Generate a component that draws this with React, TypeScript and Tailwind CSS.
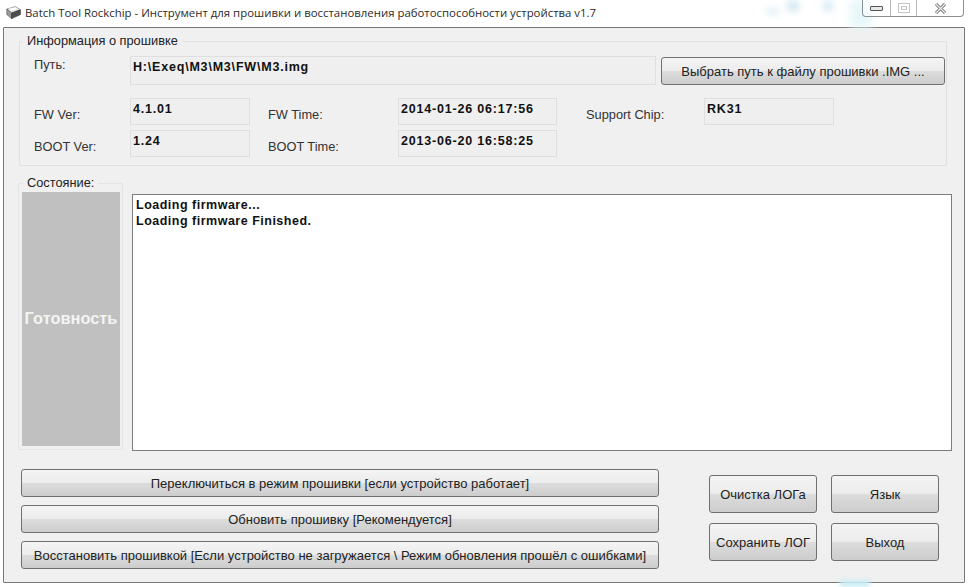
const btn = "flex items-center justify-center rounded-[3px] border border-[#707070] bg-[linear-gradient(to_bottom,#f4f4f4_0%,#ececec_48%,#dcdcdc_52%,#cdcdcd_100%)] pt-[1px] text-[13px] text-[#222222]";
const field = "border border-[#dfdfdf] bg-[#efefef] pl-[2px] pt-[1px] text-[12.5px] font-bold tracking-[0.8px] text-[#111111] leading-[18px]";
const label = "pt-[8px] text-[12.8px] text-[#333333] leading-[18px]";

function Blot({ c }: { c: string }) {
  return <span className={c} />;
}

export default function App() {
  return (
    <div className="relative h-[587px] w-[968px] overflow-hidden bg-white font-['Liberation_Sans',sans-serif]">
      <Blot c="absolute left-[766px] top-[7px] h-[8px] w-[14px] rounded-full bg-[#e6f3f8] blur-[3px]" />
      <Blot c="absolute left-[786px] top-[0px] h-[12px] w-[14px] rounded-full bg-[#d8ebf4] blur-[3px]" />
      <Blot c="absolute left-[822px] top-[0px] h-[12px] w-[12px] rounded-full bg-[#dcedf5] blur-[3px]" />
      <Blot c="absolute left-[850px] top-[0px] h-[27px] w-[22px] bg-[#e6f7fa] blur-[4px]" />
      <Blot c="absolute left-[840px] top-[580px] h-[7px] w-[30px] bg-[#c9eef5] blur-[2px]" />

      <div className="relative flex h-[27px] items-center">
        <svg width="18" height="16" viewBox="0 0 22 20" className="ml-[5px] mt-[-2px]">
          <path d="M2 5 L13 2 L19 6 L8 10 Z" fill="#e8e8e8" stroke="#777" strokeWidth="0.8" />
          <path d="M2 5 L8 10 L8 17 L2 12 Z" fill="#9a9a9a" stroke="#555" strokeWidth="0.8" />
          <path d="M8 10 L19 6 L19 12 L8 17 Z" fill="#4d4d4d" stroke="#333" strokeWidth="0.8" />
          <path d="M5 4.5 L13 3 L15 4.8 L7 6.8 Z" fill="#ffffff" />
        </svg>
        <span className="ml-[2px] mt-[-1px] whitespace-nowrap font-['Open_Sans',sans-serif] text-[11.4px] text-[#2b2b2b]">
          Batch Tool Rockchip - Инструмент для прошивки и восстановления работоспособности устройства v1.7
        </span>
        <div className="absolute right-[4px] top-0 flex h-[17px] w-[102px] rounded-b-[4px] border border-t-0 border-[#8a8f94] bg-white/60">
          <div className="flex w-[28px] items-center justify-center border-r border-[#b5b8bb]">
            <span className="h-[5px] w-[13px] rounded-[1px] border border-[#555555] bg-[#e8e8e8]" />
          </div>
          <div className="flex w-[26px] items-center justify-center border-r border-[#b5b8bb]">
            <span className="flex h-[10px] w-[12px] items-center justify-center border border-[#c4c4c4]">
              <span className="h-[4px] w-[6px] border border-[#c4c4c4]" />
            </span>
          </div>
          <div className="flex flex-1 items-center justify-center">
            <svg width="13" height="11" viewBox="0 0 13 11">
              <path d="M2 1 L11 10 M11 1 L2 10" stroke="#666" strokeWidth="3" />
              <path d="M2 1 L11 10 M11 1 L2 10" stroke="#f2f2f2" strokeWidth="1.3" />
            </svg>
          </div>
        </div>
      </div>

      <div className="ml-[3px] h-[556px] w-[962px] rounded-[1px] border border-[#767676] bg-[#f0f0f0]">
        <div className="relative ml-[15px] mt-[13px] h-[125px] w-[928px] rounded-[2px] border border-[#e0e0e0] pl-[14px] pt-[14px]">
          <span className="absolute left-[2px] top-[-9px] bg-[#f0f0f0] px-[5px] text-[12.8px] leading-[15px] text-[#222222]">Информация о прошивке</span>
          <div className="flex items-start">
            <div className="w-[96px] text-[12.8px] leading-[18px] text-[#333333]">Путь:</div>
            <div className={"h-[29px] w-[526px] " + field}>H:\Exeq\M3\M3\FW\M3.img</div>
            <button className={"ml-[5px] mt-[1px] h-[28px] w-[284px] " + btn}>Выбрать путь к файлу прошивки .IMG ...</button>
          </div>
          <div className="mt-[13px] grid grid-cols-[96px_120px_18px_130px_159px_29px_118px_130px] grid-rows-[27px_27px] gap-y-[5px]">
            <div className={label}>FW Ver:</div>
            <div className={field}>4.1.01</div>
            <div />
            <div className={label}>FW Time:</div>
            <div className={field}>2014-01-26 06:17:56</div>
            <div />
            <div className={label}>Support Chip:</div>
            <div className={field}>RK31</div>
            <div className={label}>BOOT Ver:</div>
            <div className={field}>1.24</div>
            <div />
            <div className={label}>BOOT Time:</div>
            <div className={field}>2013-06-20 16:58:25</div>
          </div>
        </div>

        <div className="ml-[14px] mt-[17px] flex items-start">
          <div className="relative h-[267px] w-[105px] rounded-[2px] border border-[#e4e4e4] pb-[3px] pl-[3px] pr-[2px] pt-[8px]">
            <span className="absolute left-[4px] top-[-9px] bg-[#f0f0f0] px-[4px] text-[12.8px] leading-[15px] text-[#222222]">Состояние:</span>
            <div className="flex h-full items-center justify-center bg-[#bfc0bf] pb-[2px] text-[16.4px] font-bold text-[#f4f4f4]">Готовность</div>
          </div>
          <div className="ml-[9px] mt-[11px] h-[257px] w-[820px] border border-[#7c7c7c] bg-white pl-[3px] pt-[2px] text-[12.5px] font-bold leading-[16px] tracking-[0.5px] text-[#111111]">
            <div>Loading firmware...</div>
            <div>Loading firmware Finished.</div>
          </div>
        </div>

        <div className="ml-[17px] mt-[18px] flex items-start">
          <div className="flex w-[638px] flex-col gap-[8px]">
            <button className={"h-[28px] " + btn}>Переключиться в режим прошивки [если устройство работает]</button>
            <button className={"h-[28px] " + btn}>Обновить прошивку [Рекомендуется]</button>
            <button className={"h-[28px] " + btn}>Восстановить прошивкой [Если устройство не загружается \ Режим обновления прошёл с ошибками]</button>
          </div>
          <div className="ml-[50px] mt-[6px] grid grid-cols-[108px_108px] grid-rows-[38px_38px] gap-x-[14px] gap-y-[10px]">
            <button className={btn}>Очистка ЛОГа</button>
            <button className={btn}>Язык</button>
            <button className={btn}>Сохранить ЛОГ</button>
            <button className={btn}>Выход</button>
          </div>
        </div>
      </div>
    </div>
  );
}
